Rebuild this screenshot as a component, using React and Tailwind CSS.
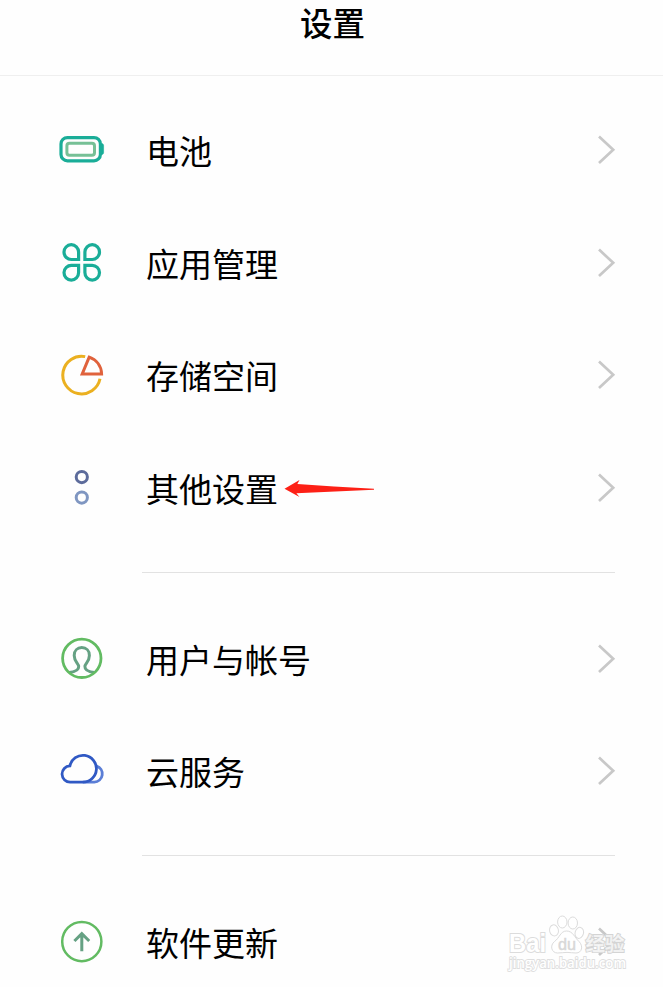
import clsx from 'clsx';

const BatteryIcon = () => (
  <svg viewBox="0 0 48 48" className="w-12 h-12" fill="none">
    <rect x="3" y="11.6" width="39.4" height="23.2" rx="6.4" stroke="#1aad98" strokeWidth="3.2" />
    <path d="M43.6 17.6h.6q1.4.6 1.4 2v7q0 1.4-1.4 2h-.6z" fill="#1aad98" stroke="#1aad98" strokeWidth="0.6" />
    <rect x="8.9" y="17.3" width="27.6" height="12" rx="2.6" stroke="#76c096" strokeWidth="3" />
  </svg>
);

const AppsIcon = () => (
  <svg viewBox="0 0 48 48" className="w-12 h-12" fill="none" stroke="#1aad98" strokeWidth="3.2">
    <path d="M20.6 20.5H13.6A7.3 7.4 0 1 1 20.6 13.1Z" />
    <path d="M26.9 20.5H34A7.3 7.4 0 1 0 26.9 13.1Z" />
    <path d="M20.6 26.3H13.6A7.3 7.4 0 1 0 20.6 33.6Z" />
    <path d="M26.9 26.3H34A7.3 7.4 0 1 1 26.9 33.6Z" />
  </svg>
);

const StorageIcon = () => (
  <svg viewBox="0 0 48 48" className="w-12 h-12" fill="none" strokeWidth="3">
    <path d="M27.2 5.6A18.8 18.8 0 1 0 42 27.8" stroke="#ebb020" />
    <path d="M31.2 6.2L24.2 23H43.6C43.4 15 38.6 8.8 31.2 6.2Z" stroke="#e0623c" />
  </svg>
);

const MoreIcon = () => (
  <svg viewBox="0 0 48 48" className="w-12 h-12" fill="none" strokeWidth="3">
    <circle cx="23.8" cy="13.1" r="5.6" stroke="#5c6b9b" />
    <circle cx="23.8" cy="33.6" r="5.6" stroke="#7f96c1" />
  </svg>
);

const UserIcon = () => (
  <svg viewBox="0 0 48 48" className="w-12 h-12" fill="none">
    <path
      d="M11 37.6C16.5 37 20.9 35.4 20.7 31.4C20.5 28.6 16.2 26.4 16.2 20.4C16.2 15.6 19.4 12.6 23.8 12.6S31.4 15.6 31.4 20.4C31.4 26.4 27.1 28.6 26.9 31.4C26.7 35.4 31.1 37 36.6 37.6"
      stroke="#65a183"
      strokeWidth="3"
    />
    <circle cx="23.8" cy="23.3" r="19.2" stroke="#62bb62" strokeWidth="2.8" />
  </svg>
);

const CloudIcon = () => (
  <svg viewBox="0 0 48 48" className="w-12 h-12" fill="none" strokeWidth="2.8">
    <path d="M38.6 19.1A8.2 8.2 0 0 1 36.3 35.1H24.8" stroke="#5b7ed6" />
    <path d="M25 35.1H12.4A8.1 8.1 0 0 1 11.9 18.9A13.4 13.4 0 1 1 25 35.1Z" stroke="#3059c4" />
  </svg>
);

const UpdateIcon = () => (
  <svg viewBox="0 0 48 48" className="w-12 h-12" fill="none">
    <circle cx="23.8" cy="23.6" r="19.6" stroke="#62bb62" strokeWidth="2.5" />
    <path d="M23.8 33.2V15.8M16.4 23L23.8 15.6L31.2 23" stroke="#65a183" strokeWidth="3" />
  </svg>
);

const Chevron = () => (
  <svg viewBox="0 0 20 30" className="w-5 h-[30px]" fill="none">
    <path d="M2 1.6L16.2 14.8L2 28" stroke="#c8c8c8" strokeWidth="2.7" />
  </svg>
);

const PointerArrow = () => (
  <svg viewBox="0 0 92 20" className="w-[92px] h-5 ml-[6px] mt-[2px]">
    <path d="M0.5 9.8L15.5 1L13.4 4.9L50 7.4L90 9.7V10.7L12.4 14.2L15.5 18Z" fill="#fd2016" />
  </svg>
);

const Watermark = () => (
  <svg
    viewBox="0 0 124 62"
    className="absolute right-[32px] top-[26px] w-[124px] h-[62px] overflow-visible"
    fill="#fff"
    stroke="#dcdcdc"
    strokeWidth="1"
  >
    <g fontFamily="'Liberation Sans', sans-serif" fontWeight="700">
      <text x="2" y="40" fontSize="26" textLength="37" lengthAdjust="spacingAndGlyphs" strokeWidth="2" paintOrder="stroke">
        Bai
      </text>
      <ellipse cx="47" cy="18.4" rx="4.4" ry="5.6" transform="rotate(-12 47 18.4)" />
      <ellipse cx="55.3" cy="10" rx="4.7" ry="6" />
      <ellipse cx="65.8" cy="11" rx="4.7" ry="6" />
      <ellipse cx="72.3" cy="20.9" rx="4.2" ry="5.6" transform="rotate(14 72.3 20.9)" />
      <path d="M59.5 19C53.5 19 52.5 26 47.5 29.5C42.5 33.5 44.5 41 50.5 41C54 41 57 40.4 60 40.4S66 41 69 41C75 41 76.5 34 72 29.5C67.5 25.5 66 19 59.5 19Z" />
      <text x="51" y="37.5" fontSize="17" fontWeight="400" textLength="18" lengthAdjust="spacingAndGlyphs" fill="#d8d8d8" stroke="#d8d8d8" strokeWidth="0.5">
        du
      </text>
    </g>
    <text
      x="78.5"
      y="39"
      fontSize="19.5"
      fontWeight="700"
      fontFamily="'Noto Sans CJK SC', sans-serif"
      fillOpacity="0.7"
      stroke="#d4d4d4"
      strokeWidth="1.8"
      paintOrder="stroke"
    >
      经验
    </text>
    <text
      x="2"
      y="55.5"
      fontSize="13.5"
      fontWeight="600"
      fontFamily="'Open Sans', 'Noto Sans', sans-serif"
      textLength="117"
      lengthAdjust="spacingAndGlyphs"
      stroke="#dedede"
      strokeWidth="1.8"
      paintOrder="stroke"
    >
      jingyan.baidu.com
    </text>
  </svg>
);

const groups = [
  [
    { label: '电池', icon: BatteryIcon },
    { label: '应用管理', icon: AppsIcon },
    { label: '存储空间', icon: StorageIcon },
    { label: '其他设置', icon: MoreIcon, pointed: true },
  ],
  [
    { label: '用户与帐号', icon: UserIcon },
    { label: '云服务', icon: CloudIcon },
  ],
  [{ label: '软件更新', icon: UpdateIcon, watermark: true }],
];

function SettingRow({ item }) {
  const Icon = item.icon;
  return (
    <li className="relative flex items-center h-[112.5px] pl-[58px] pr-[46px]">
      <Icon />
      <span className="ml-10 pt-px text-[33px] leading-none text-black">{item.label}</span>
      {item.pointed && <PointerArrow />}
      <span className="ml-auto">
        <Chevron />
      </span>
      {item.watermark && <Watermark />}
    </li>
  );
}

export default function App() {
  return (
    <div className="w-full h-[987px] overflow-hidden bg-[#fefefe] font-['Noto_Sans_CJK_SC',sans-serif]">
      <header className="h-[76px] border-b border-[#efefef] text-center">
        <h1 className="pl-[2px] text-[32.5px] leading-[44px] font-medium text-black">设置</h1>
      </header>
      <main className="pt-[18px]">
        {groups.map((items, i) => (
          <section key={items[0].label}>
            <ul className={clsx(i > 0 && 'pt-[29.25px]')}>
              {items.map((item) => (
                <SettingRow key={item.label} item={item} />
              ))}
            </ul>
            {i < groups.length - 1 && <div className="mt-7 ml-[142px] mr-[48px] h-px bg-[#e2e2e2]" />}
          </section>
        ))}
      </main>
    </div>
  );
}
